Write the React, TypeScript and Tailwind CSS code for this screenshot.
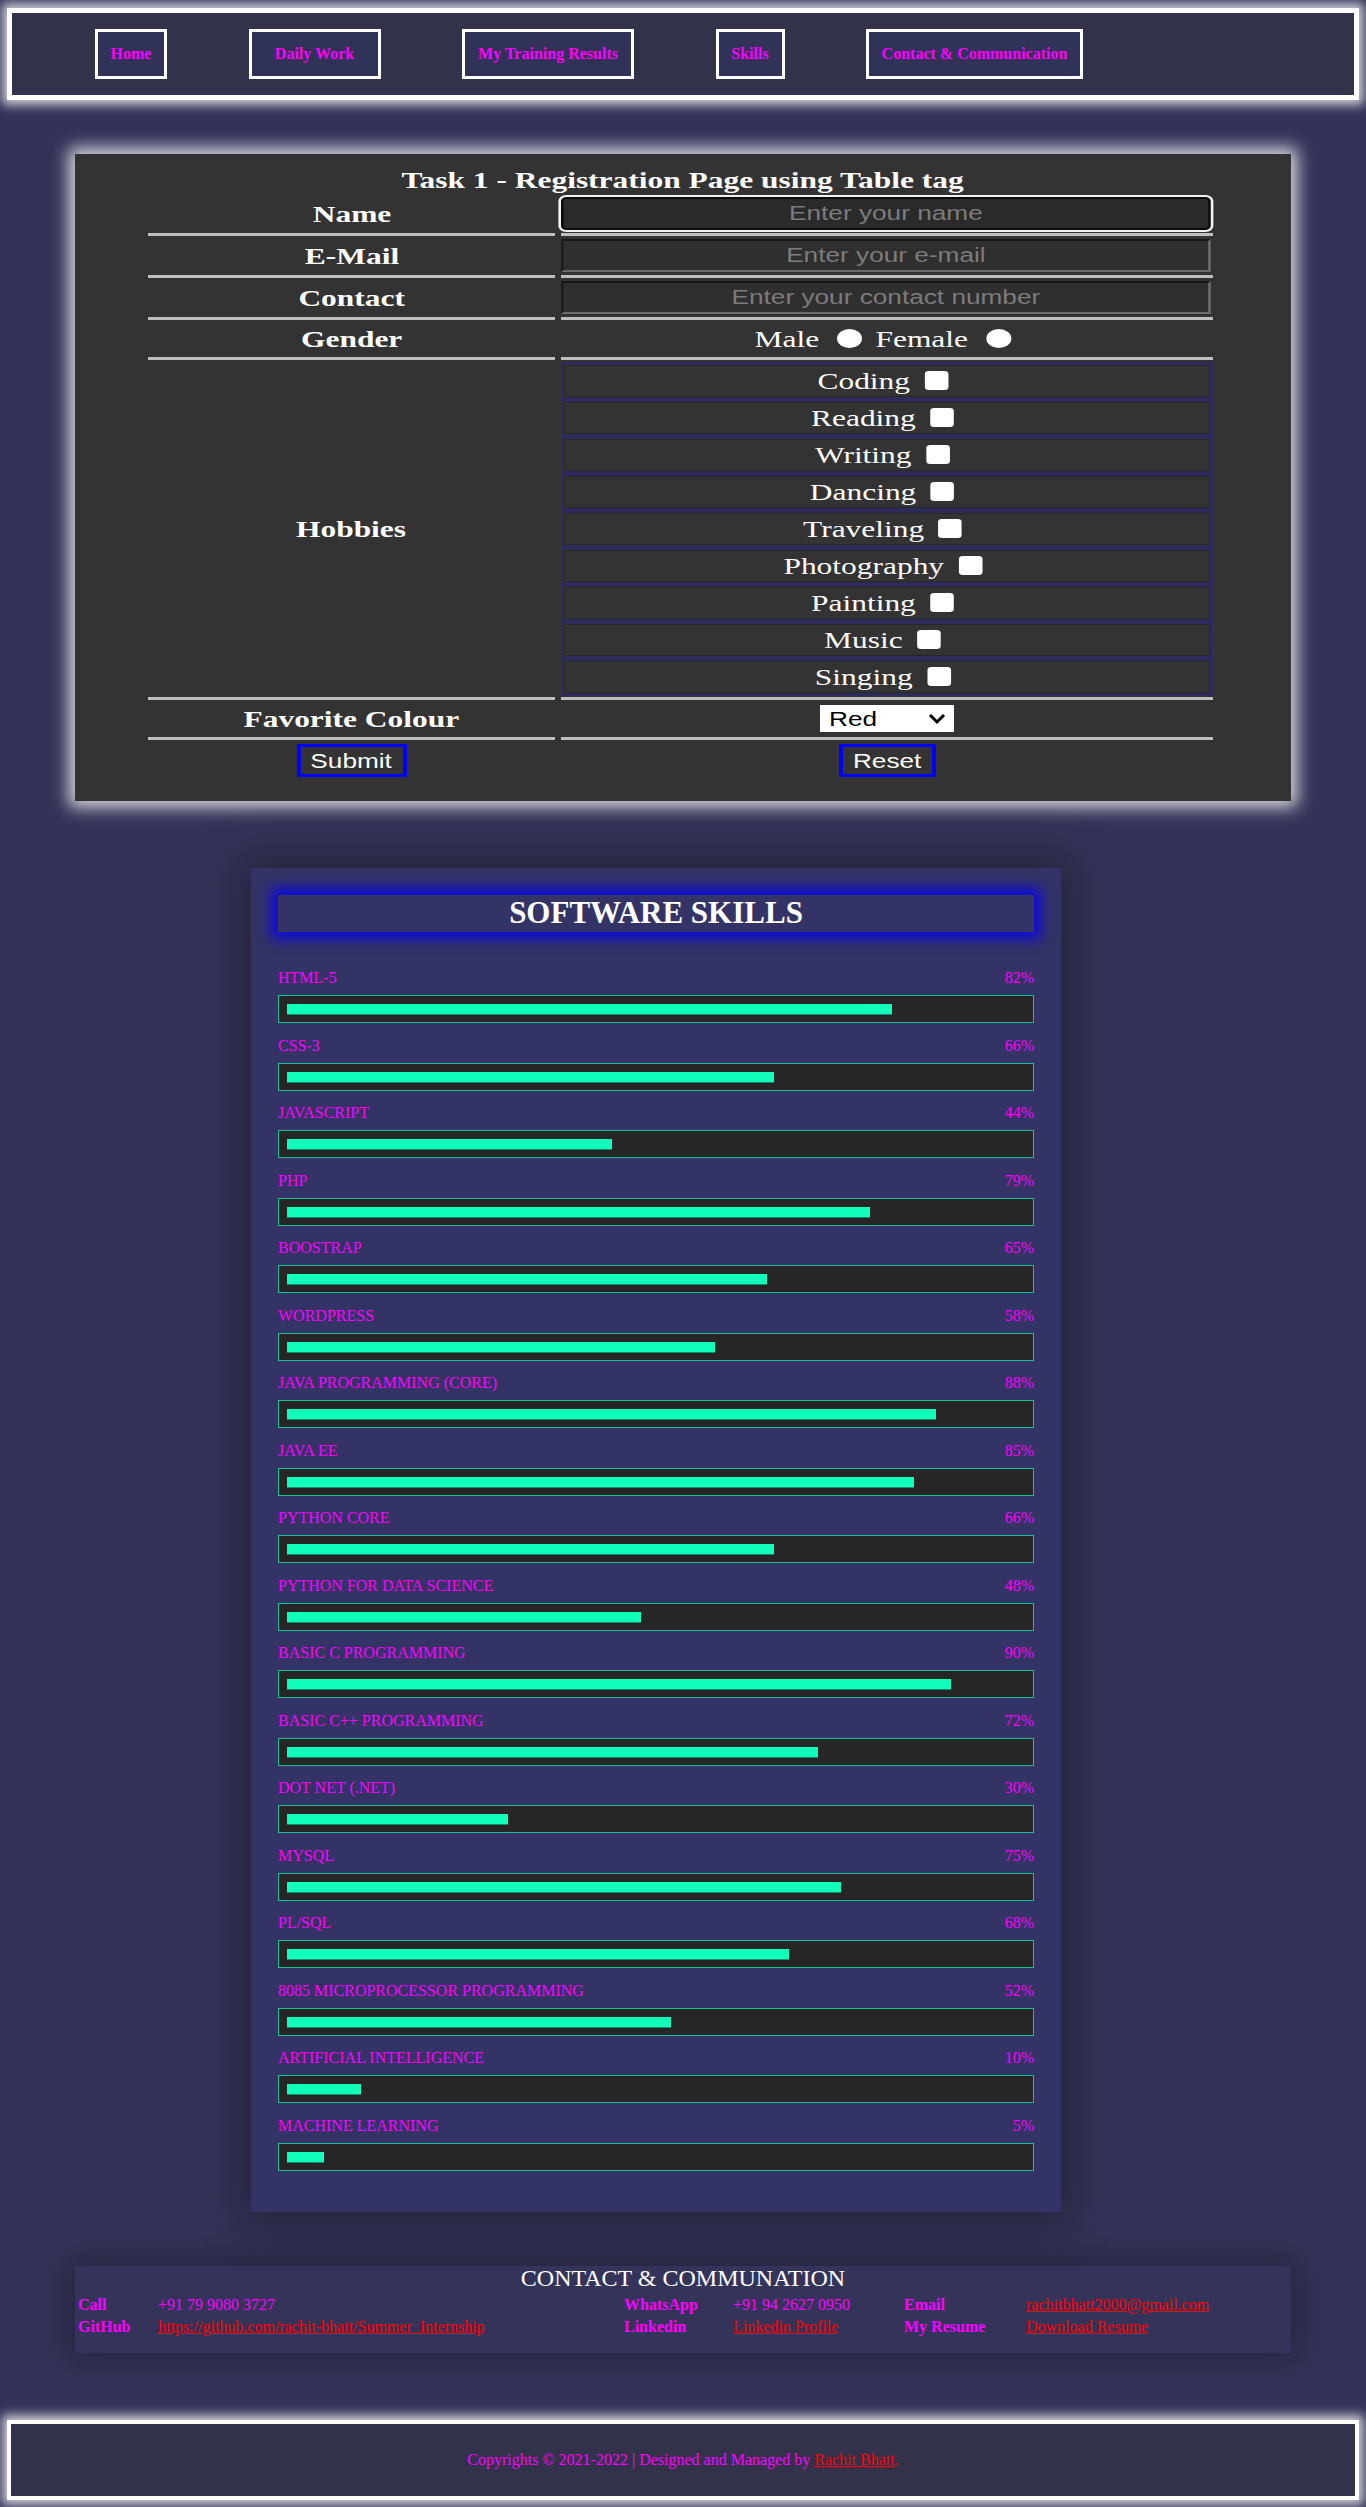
import React from "react";

function Sx({ children, className = "" }: { children: React.ReactNode; className?: string }) {
  return <span className={"inline-block [transform:scaleX(1.31)] " + className}>{children}</span>;
}

const navItems: [string, string][] = [
  ["Home", "w-[72px]"],
  ["Daily Work", "w-[132px]"],
  ["My Training Results", "w-[172px]"],
  ["Skills", "w-[69px]"],
  ["Contact & Communication", "w-[217px]"],
];

const hobbies = ["Coding", "Reading", "Writing", "Dancing", "Traveling", "Photography", "Painting", "Music", "Singing"];

const skills: [string, number][] = [
  ["HTML-5", 82],
  ["CSS-3", 66],
  ["JAVASCRIPT", 44],
  ["PHP", 79],
  ["BOOSTRAP", 65],
  ["WORDPRESS", 58],
  ["JAVA PROGRAMMING (CORE)", 88],
  ["JAVA EE", 85],
  ["PYTHON CORE", 66],
  ["PYTHON FOR DATA SCIENCE", 48],
  ["BASIC C PROGRAMMING", 90],
  ["BASIC C++ PROGRAMMING", 72],
  ["DOT NET (.NET)", 30],
  ["MYSQL", 75],
  ["PL/SQL", 68],
  ["8085 MICROPROCESSOR PROGRAMMING", 52],
  ["ARTIFICIAL INTELLIGENCE", 10],
  ["MACHINE LEARNING", 5],
];

function Cell({ children, h = "h-[42px]" }: { children?: React.ReactNode; h?: string }) {
  return (
    <div className={"flex items-center justify-center border-b-[3px] border-[#bfbfbf] " + h}>{children}</div>
  );
}

function TextInput({ placeholder, focused }: { placeholder: string; focused?: boolean }) {
  return (
    <div className="w-full flex justify-start">
      <input
        readOnly
        placeholder={placeholder}
        className={
          focused
            ? "origin-left [transform:scaleX(1.31)] w-[496px] h-[33px] rounded-[4px] border-2 border-[#0d0d0d] bg-[#2a2a2a] shadow-[0_0_0_2px_#f2f2f2] text-center text-[20px] font-['Liberation_Sans',Arial,sans-serif] placeholder:text-[#7c7c7c] outline-none"
            : "origin-left [transform:scaleX(1.31)] w-[496px] h-[33px] border-2 border-t-[#161616] border-l-[#1c1c1c] border-b-[#6c6c6c] border-r-[#6c6c6c] bg-[#2f2f2f] text-center text-[20px] font-['Liberation_Sans',Arial,sans-serif] placeholder:text-[#7c7c7c] outline-none"
        }
      />
    </div>
  );
}

export default function App() {
  return (
    <div className="min-h-[2507px] bg-[#333358] pt-[8px] pb-[8px] font-['Liberation_Serif','Times_New_Roman',serif]">
      {/* Header */}
      <header className="mx-[7px] h-[92px] border-[5px] border-white bg-[#32334a] shadow-[0_0_10px_5px_rgba(255,255,255,0.75)] flex items-center pl-[83px] gap-[81.5px]">
        {navItems.map(([t, w]) => (
          <a
            key={t}
            className={"h-[50px] border-[3px] border-white bg-[#313257] flex items-center justify-center text-[16px] font-bold text-[#ff00ff] whitespace-nowrap " + w}
          >
            {t}
          </a>
        ))}
      </header>

      {/* Registration */}
      <section className="mx-[75px] mt-[54px] h-[647px] bg-[#333333] shadow-[0_0_16px_6px_rgba(255,255,255,0.82)] pt-[12px] text-white">
        <div className="h-[28px] leading-[28px] text-center text-[24px] font-bold">
          <Sx>Task 1 - Registration Page using Table tag</Sx>
        </div>
        <div className="ml-[73px] w-[1065px] grid grid-cols-[407px_652px] gap-x-[6px] text-[24px]">
          <Cell><Sx className="font-bold">Name</Sx></Cell>
          <Cell><TextInput placeholder="Enter your name" focused /></Cell>

          <Cell><Sx className="font-bold">E-Mail</Sx></Cell>
          <Cell><TextInput placeholder="Enter your e-mail" /></Cell>

          <Cell><Sx className="font-bold">Contact</Sx></Cell>
          <Cell><TextInput placeholder="Enter your contact number" /></Cell>

          <Cell h="h-[40px]"><Sx className="font-bold">Gender</Sx></Cell>
          <Cell h="h-[40px]">
            <Sx className="inline-flex items-center">
              <span>Male</span>
              <span className="inline-block shrink-0 ml-[14px] w-[19px] h-[19px] rounded-full bg-white" />
              <span className="ml-[10px]">Female</span>
              <span className="inline-block shrink-0 ml-[14px] mr-[7px] w-[19px] h-[19px] rounded-full bg-white" />
            </Sx>
          </Cell>

          <Cell h="h-[340px]"><Sx className="font-bold">Hobbies</Sx></Cell>
          <Cell h="h-[340px]">
            <div className="w-full bg-[#2d2b5c] p-[3px] flex flex-col gap-[5px]">
              {hobbies.map((h) => (
                <div key={h} className="h-[32px] border border-[#28281c] bg-[#333333] flex items-center justify-center">
                  <Sx className="inline-flex items-center">
                    <span>{h}</span>
                    <span className="inline-block shrink-0 ml-[11px] mr-[7px] w-[18px] h-[19px] rounded-[3px] bg-white" />
                  </Sx>
                </div>
              ))}
            </div>
          </Cell>

          <Cell h="h-[40px]"><Sx className="font-bold">Favorite Colour</Sx></Cell>
          <Cell h="h-[40px]">
            <div className="w-[134px] h-[27px] bg-white flex items-center justify-between pl-[9px] pr-[7px] text-black text-[20px] font-['Liberation_Sans',Arial,sans-serif]">
              <Sx className="origin-left">Red</Sx>
              <svg width="20" height="12" viewBox="0 0 20 12">
                <polyline points="3,2 10,9 17,2" fill="none" stroke="#000" strokeWidth="3" />
              </svg>
            </div>
          </Cell>

          <div className="h-[41px] flex items-center justify-center">
            <button className="w-[110px] h-[33px] border-y-[3px] border-x-[4px] border-[#0000ff] bg-transparent text-white text-[20px] font-['Liberation_Sans',Arial,sans-serif] flex items-center justify-center">
              <Sx>Submit</Sx>
            </button>
          </div>
          <div className="h-[41px] flex items-center justify-center">
            <button className="w-[97px] h-[33px] border-y-[3px] border-x-[4px] border-[#0000ff] bg-transparent text-white text-[20px] font-['Liberation_Sans',Arial,sans-serif] flex items-center justify-center">
              <Sx>Reset</Sx>
            </button>
          </div>
        </div>
      </section>

      {/* Skills */}
      <section className="ml-[251px] mt-[67px] w-[810px] bg-[#343365] shadow-[0_0_40px_14px_rgba(0,0,0,0.28)] pt-[27px] px-[27px] pb-[41px]">
        <div className="h-[37px] bg-[#343365] shadow-[0_0_12px_7px_#0b0bdc] flex items-center justify-center text-white text-[31px] font-bold">
          SOFTWARE SKILLS
        </div>
        <div className="mt-[36px] flex flex-col gap-[12.5px]">
          {skills.map(([name, pct]) => (
            <div key={name}>
              <div className="h-[20px] leading-[20px] flex justify-between text-[16px] text-[#ff00ff]">
                <span>{name}</span>
                <span>{pct}%</span>
              </div>
              <div className="mt-[7px] h-[28px] border border-[#1bbf95] bg-[#262626] p-[8px]">
                <div className="h-[10px] bg-[#12ffbb] shadow-[0_1px_0_#0b8f6b]" style={{ width: pct + "%" }} />
              </div>
            </div>
          ))}
        </div>
      </section>

      {/* Contact */}
      <section className="mx-[75px] mt-[54px] bg-[#34345a] shadow-[0_0_30px_10px_rgba(0,0,0,0.25)] pb-[15px]">
        <div className="h-[28px] leading-[24px] text-center text-[24px] text-white">CONTACT &amp; COMMUNATION</div>
        <div className="px-[3px] grid grid-cols-[80px_466px_109px_171px_122px_1fr] text-[16px] leading-[22px] text-[#ff00ff] whitespace-nowrap">
          <span className="font-bold">Call</span>
          <span>+91 79 9080 3727</span>
          <span className="font-bold">WhatsApp</span>
          <span>+91 94 2627 0950</span>
          <span className="font-bold">Email</span>
          <a className="text-[#ff0000] underline">rachitbhatt2000@gmail.com</a>

          <span className="font-bold">GitHub</span>
          <a className="text-[#ff0000] underline">https://github.com/rachit-bhatt/Summer_Internship</a>
          <span className="font-bold">Linkedin</span>
          <a className="text-[#ff0000] underline">Linkedin Profile</a>
          <span className="font-bold">My Resume</span>
          <a className="text-[#ff0000] underline">Download Resume</a>
        </div>
      </section>

      {/* Footer */}
      <footer className="mx-[7px] mt-[67px] h-[80px] border-[4px] border-white bg-[#32334a] shadow-[0_0_10px_5px_rgba(255,255,255,0.75)] flex items-center justify-center text-[16px] text-[#ff00ff]">
        <p>
          Copyrights © 2021-2022 | Designed and Managed by{" "}
          <a className="text-[#ff0000] underline">Rachit Bhatt</a>
          <span className="text-[#ff0000]">.</span>
        </p>
      </footer>
    </div>
  );
}
